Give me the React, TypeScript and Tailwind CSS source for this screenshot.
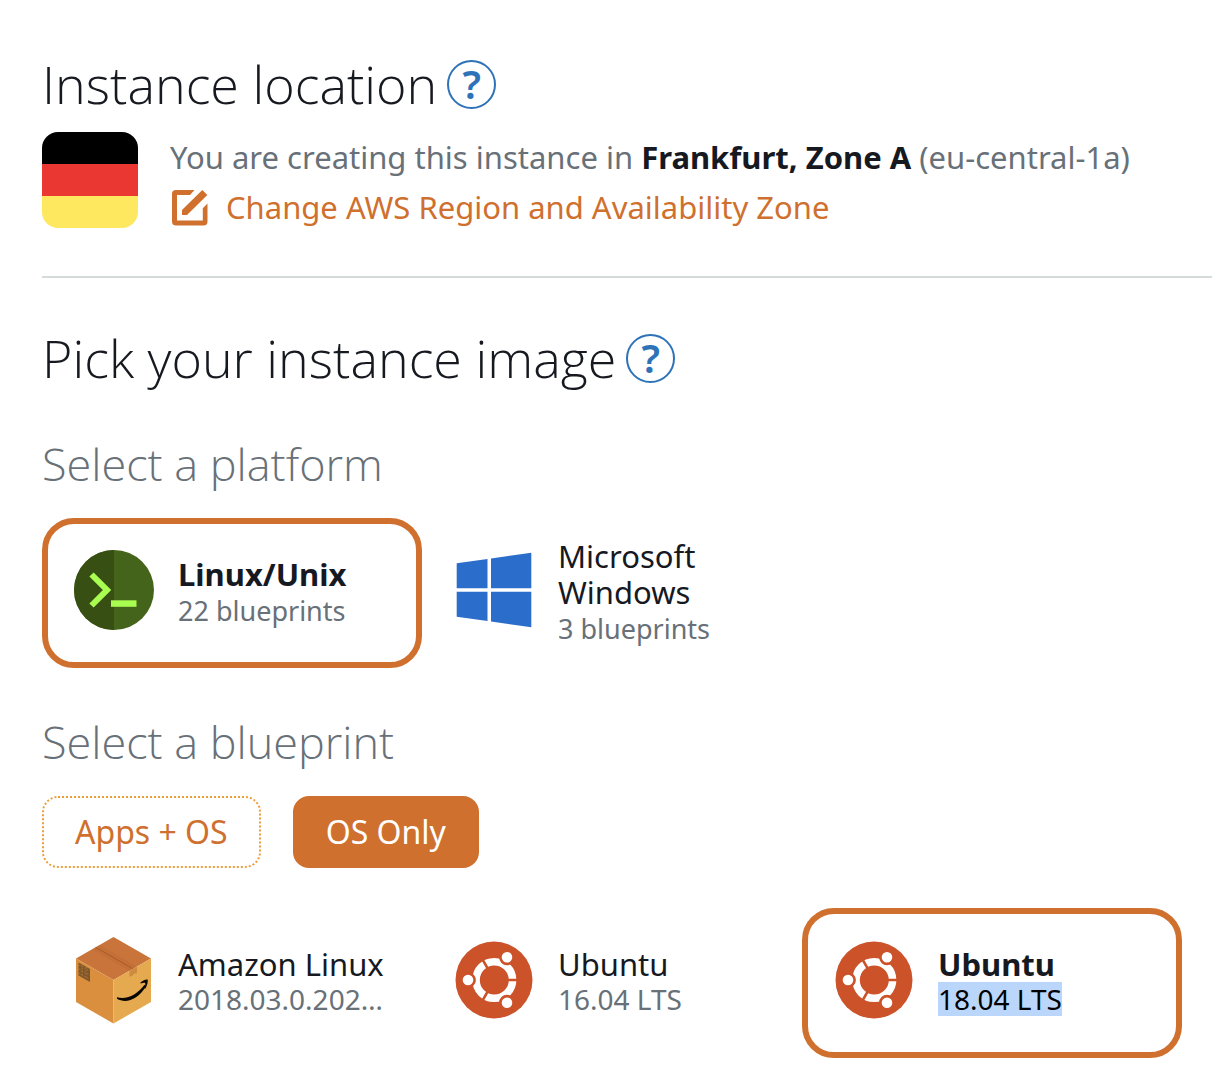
import { useState, type ReactNode } from "react";

function HelpButton({ label }: { label: string }) {
  return (
    <button
      type="button"
      aria-label={label}
      className="flex size-[49px] shrink-0 items-center justify-center rounded-full border-2 border-[#2e73b8] text-[40px] leading-none font-semibold text-[#2e73b8]"
    >
      ?
    </button>
  );
}

function GermanFlag() {
  return (
    <div role="img" aria-label="Germany" className="flex size-24 shrink-0 flex-col overflow-hidden rounded-2xl">
      <div className="flex-1 bg-black" />
      <div className="flex-1 bg-[#eb3732]" />
      <div className="flex-1 bg-[#fde85f]" />
    </div>
  );
}

function EditIcon() {
  return (
    <svg viewBox="-2 -2 38 38" className="size-[38px] shrink-0" aria-hidden="true">
      <path d="M22.500 0H4a4 4 0 0 0-4 4V31.500a4 4 0 0 0 4 4h27.500a4 4 0 0 0 4-4V13.500l-4.700 4.700V30.500H5V5h13z" fill="#cf702e" />
      <path d="M30.300 0l5 5-20.300 20H10v-5z" fill="#cf702e" />
    </svg>
  );
}

function TerminalIcon() {
  return (
    <svg viewBox="0 0 80 80" className="size-20" aria-hidden="true">
      <circle cx="40" cy="40" r="40" fill="#45641b" />
      <path d="M40 0a40 40 0 0 0 0 80z" fill="#384f14" />
      <path d="M17.500 24.500L33 40 17.500 55.500" fill="none" stroke="#a9fd50" strokeWidth="6" />
      <path d="M37 50.300h25.500v6.500H37z" fill="#a9fd50" />
    </svg>
  );
}

function WindowsIcon() {
  return (
    <svg viewBox="0 0 80 80" className="size-20" aria-hidden="true">
      <path d="M2.700 13.300L33.500 9v29.300H2.700zM37 8.500L77.300 2.800v35.500H37zM2.700 41.800h30.800V71L2.700 66.800zM37 41.800h40.300v35.400L37 71.500z" fill="#2b6dcb" />
    </svg>
  );
}

function BoxIcon() {
  return (
    <svg viewBox="0 0 80 90" className="h-[90px] w-20" aria-hidden="true">
      <path d="M39.500 2L77 23.500 39.500 45 2 23.500z" fill="#c9743a" />
      <path d="M2 23.500L39.500 45v43.500L2 67z" fill="#d98f3d" />
      <path d="M77 23.500L39.500 45v43.500L77 67z" fill="#e5a94f" />
      <path d="M25.500 10.100L63 31.700l-7.500 4.200L18 14.500z" fill="#b96832" opacity=".35" />
      <path d="M21.500 12.300L59 33.800" stroke="#a65b2c" strokeWidth="1" />
      <path d="M55.500 35.900L63 31.700v6.600l-3 .5-1.500 2-3 1z" fill="#ce8b40" />
      <path d="M4.500 27.500L16 34v13L4.500 40.500z" fill="#80572a" />
      <path d="M5 30l10.500 6M5 34l10.500 6M5 38l10.500 6M8 30v12M12 32v12" stroke="#aa7536" strokeWidth="1" strokeDasharray="1.500 1.500" />
      <path d="M43 62.300c10 2.700 20-2.500 27.500-12.500l1.400 1.700C64 64.500 52 69 43 63.800z" fill="#080704" />
      <path d="M66.500 47.500c3-2.600 5-3.300 7.200-3 .3 3-.5 5.800-2.400 9.200l-.9-.6c.9-2.200 1-3.800.7-5.300-1.400-.3-2.800 0-4.600.6z" fill="#080704" />
    </svg>
  );
}

function UbuntuIcon() {
  return (
    <svg viewBox="0 0 80 80" className="size-20" aria-hidden="true">
      <circle cx="40" cy="40" r="38.500" fill="#cb5229" />
      <circle cx="40.300" cy="40" r="18.300" fill="none" stroke="#fff" strokeWidth="7.600" />
      <path d="M40.300 40H64M40.300 40L28.300 19.200M40.300 40L28.300 60.800" stroke="#cb5229" strokeWidth="2.600" />
      <g fill="#fff" stroke="#cb5229" strokeWidth="2.600">
        <circle cx="14" cy="40" r="6.600" />
        <circle cx="53" cy="17.300" r="6.600" />
        <circle cx="53" cy="62.700" r="6.600" />
      </g>
    </svg>
  );
}

type ChoiceProps = {
  group: string;
  name: string;
  icon: ReactNode;
  selected: boolean;
  onSelect: () => void;
  children: ReactNode;
};

function Choice({ group, name, icon, selected, onSelect, children }: ChoiceProps) {
  return (
    <label
      className={`flex min-h-[150px] cursor-pointer items-center gap-6 rounded-[32px] border-6 px-[26px] ${
        selected ? "border-[#cf702e]" : "border-transparent"
      }`}
    >
      <input type="radio" name={group} checked={selected} onChange={onSelect} className="sr-only" />
      <span className="flex w-20 shrink-0 justify-center pb-1.5">{icon}</span>
      <span className="flex min-w-0 flex-1 flex-col items-start">
        <span className={`text-[31px] leading-9 text-[#16191f] ${selected ? "font-bold" : ""}`}>{name}</span>
        {children}
      </span>
    </label>
  );
}

const platforms = [
  { id: "linux", name: "Linux/Unix", detail: "22 blueprints", icon: <TerminalIcon /> },
  { id: "windows", name: "Microsoft Windows", detail: "3 blueprints", icon: <WindowsIcon /> },
];

const blueprints = [
  { id: "amazon", name: "Amazon Linux", detail: "2018.03.0.202…", icon: <BoxIcon />, tone: "text-[#687078]" },
  { id: "ubuntu16", name: "Ubuntu", detail: "16.04 LTS", icon: <UbuntuIcon />, tone: "text-[#687078]" },
  { id: "ubuntu18", name: "Ubuntu", detail: "18.04 LTS", icon: <UbuntuIcon />, tone: "bg-[#bbd6fb] text-black" },
];

export default function App() {
  const [platform, setPlatform] = useState("linux");
  const [blueprint, setBlueprint] = useState("ubuntu18");
  const [kind, setKind] = useState("os");

  const heading = "font-['Open_Sans',sans-serif] text-[52px] leading-[72px] font-light";
  const subheading = "font-['Open_Sans',sans-serif] text-[45px] leading-[60px] font-light text-[#687078]";
  const tab = "h-[72px] rounded-2xl border-2 px-[31px] text-[32px]";
  const active = "border-[#cf702e] bg-[#cf702e] text-white";
  const idle = "border-dotted border-[#ec9d3b] bg-white text-[#cf702e]";

  return (
    <main className="overflow-hidden bg-white pt-12 pb-6 pl-[42px] font-['Noto_Sans',sans-serif] text-[#16191f]">
      <section className="border-b-2 border-[#d5dbdb] pb-11">
        <div className="flex h-[72px] items-center gap-[10px]">
          <h1 className={heading}>Instance location</h1>
          <HelpButton label="Help with instance location" />
        </div>
        <div className="mt-3 flex gap-8">
          <GermanFlag />
          <div className="text-[31px] leading-[50px] whitespace-nowrap">
            <p className="text-[#687078]">
              You are creating this instance in <strong className="text-[#16191f]">Frankfurt, Zone A</strong>{" "}
              (eu-central-1a)
            </p>
            <a href="#region" className="flex items-center gap-[18px] text-[#cf702e]">
              <EditIcon />
              Change AWS Region and Availability Zone
            </a>
          </div>
        </div>
      </section>

      <section className="pt-11 pr-[30px]">
        <div className="flex h-[72px] items-center gap-[10px]">
          <h1 className={heading}>Pick your instance image</h1>
          <HelpButton label="Help with instance images" />
        </div>

        <h2 className={`mt-10 ${subheading}`}>Select a platform</h2>
        <div className="mt-6 grid grid-cols-3">
          {platforms.map(({ id, detail, ...item }) => (
            <Choice key={id} group="platform" {...item} selected={platform === id} onSelect={() => setPlatform(id)}>
              <span className="text-[27px] leading-[38px] text-[#687078]">{detail}</span>
            </Choice>
          ))}
        </div>

        <h2 className={`mt-11 ${subheading}`}>Select a blueprint</h2>
        <div className="mt-6 flex gap-8">
          <button type="button" onClick={() => setKind("apps")} className={`${tab} ${kind === "apps" ? active : idle}`}>
            Apps + OS
          </button>
          <button type="button" onClick={() => setKind("os")} className={`${tab} ${kind === "os" ? active : idle}`}>
            OS Only
          </button>
        </div>
        <div className="mt-10 grid grid-cols-3">
          {blueprints.map(({ id, detail, tone, ...item }) => (
            <Choice key={id} group="blueprint" {...item} selected={blueprint === id} onSelect={() => setBlueprint(id)}>
              <span className={`mb-1 text-[28px] leading-[34px] whitespace-nowrap ${tone}`}>{detail}</span>
            </Choice>
          ))}
        </div>
      </section>
    </main>
  );
}
